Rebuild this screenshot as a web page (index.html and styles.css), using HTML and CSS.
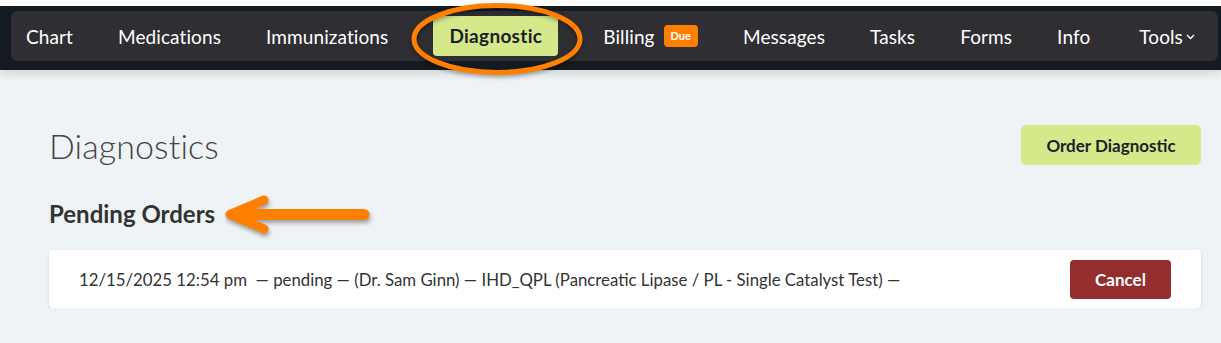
FILE: index.html
```html
<!DOCTYPE html>
<html>
<head>
<meta charset="utf-8">
<link rel="stylesheet" href="styles.css">
</head>
<body>
<header class="topbar">
  <nav class="nav">
    <a class="nav-link">Chart</a>
    <a class="nav-link">Medications</a>
    <a class="nav-link">Immunizations</a>
    <a class="nav-link active">Diagnostic</a>
    <a class="nav-link">Billing <span class="badge">Due</span></a>
    <a class="nav-link">Messages</a>
    <a class="nav-link">Tasks</a>
    <a class="nav-link">Forms</a>
    <a class="nav-link">Info</a>
    <a class="nav-link tools">Tools<svg class="chev" width="9" height="6" viewBox="0 0 9 6"><path d="M1 1l3.5 3.5L8 1" fill="none" stroke="#fff" stroke-width="1.4"/></svg></a>
  </nav>
  <svg class="ring" width="180" height="78" viewBox="0 0 180 78"><ellipse cx="88" cy="38" rx="83" ry="33.5" fill="none" stroke="#ff8000" stroke-width="5"/></svg>
</header>
<main class="content">
  <div class="title-row">
    <h1 class="title">Diagnostics</h1>
    <button class="btn-order">Order Diagnostic</button>
  </div>
  <h2 class="subtitle">Pending Orders</h2>
  <svg class="arrow" width="160" height="50" viewBox="0 0 160 50"><g fill="none" stroke="#ff8000" stroke-linecap="round" stroke-linejoin="round"><polyline points="42,8 8,22.5 42,37" stroke-width="9"/><line x1="12" y1="22.5" x2="142" y2="22.5" stroke-width="11"/></g></svg>
  <div class="order-card">
    <span class="order-text">12/15/2025 12:54 pm&nbsp; — pending — (Dr. Sam Ginn) — IHD_QPL (Pancreatic Lipase / PL - Single Catalyst Test) —</span>
    <button class="btn-cancel">Cancel</button>
  </div>
</main>
</body>
</html>
```
FILE: styles.css
```css
html, body { margin: 0; padding: 0; }
body {
  background: #eef3f6;
  font-family: Lato, "Liberation Sans", sans-serif;
  color: #333;
  position: relative;
}
.topbar {
  border-top: 6px solid #fff;
  background: #141a21;
  padding: 5px 3px 9px 11px;
  box-shadow: 0 3px 9px rgba(0,0,0,0.13);
  position: relative;
}
.nav {
  display: flex;
  align-items: center;
  gap: 45px;
  height: 50px;
  padding-left: 15px;
  background: #2e2e33;
  border-radius: 6px;
}
.nav-link {
  display: flex;
  align-items: center;
  color: #fff;
  font-size: 19px;
  letter-spacing: 0.1px;
  white-space: nowrap;
}
.nav-link.active {
  background: #d6e98a;
  color: #1b2129;
  font-weight: 700;
  padding: 8px 16px 9px;
  border-radius: 4px;
  letter-spacing: 0.3px;
}
.badge {
  display: inline-block;
  margin-left: 9px;
  background: #ff7f00;
  color: #fff;
  font-size: 11px;
  font-weight: 700;
  padding: 5px 7px;
  border-radius: 4px;
  line-height: 12px;
  letter-spacing: 0;
}
.tools { margin-left: 4px; }
.chev { margin-left: 3px; margin-top: 2px; }
.ring {
  position: absolute;
  left: 409px;
  top: -5px;
  filter: drop-shadow(0 2px 2px rgba(0,0,0,0.35));
}
.content {
  padding: 53px 20px 0 49px;
  position: relative;
}
.title-row {
  display: flex;
  justify-content: space-between;
  align-items: center;
}
.title {
  margin: 0;
  font-size: 34px;
  font-weight: 300;
  color: #444;
  line-height: 46px;
  letter-spacing: 0.1px;
}
.btn-order {
  background: #d6e98a;
  border: 0;
  border-radius: 5px;
  width: 180px;
  height: 40px;
  font-family: inherit;
  font-size: 17px;
  font-weight: 700;
  color: #1b2129;
  margin-top: -2px;
}
.subtitle {
  margin: 29px 0 0;
  font-size: 24px;
  font-weight: 700;
  color: #333;
  line-height: 32px;
}
.arrow {
  position: absolute;
  left: 222px;
  top: 122px;
  overflow: visible;
  filter: drop-shadow(1px 3px 2px rgba(0,0,0,0.35));
}
.order-card {
  margin-top: 20px;
  background: #fff;
  border-radius: 4px;
  box-shadow: 0 1px 3px rgba(0,0,0,0.15);
  height: 58px;
  display: flex;
  align-items: center;
  justify-content: space-between;
  padding: 0 30px 0 30px;
}
.order-text {
  font-size: 16.8px;
  color: #333;
}
.btn-cancel {
  background: #942d2d;
  color: #fff;
  border: 0;
  border-radius: 4px;
  width: 101px;
  height: 39px;
  font-family: inherit;
  font-size: 17px;
  font-weight: 700;
}
```
